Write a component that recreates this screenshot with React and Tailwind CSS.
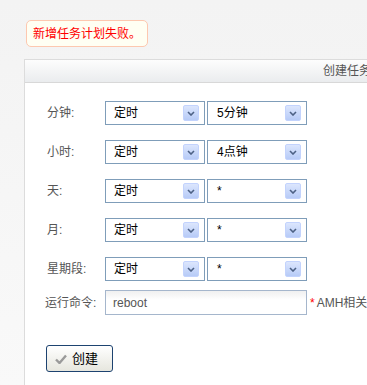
import React from 'react';

const FONT = { fontFamily: '"Liberation Sans", "Noto Sans CJK SC", sans-serif' };

const SelectBox = ({ value, pad = 'pl-[8px]' }) => (
  <div className={`relative flex items-center w-[100px] h-[24px] border border-[#7f9db9] bg-white text-[12px] text-black ${pad}`}>
    <span>{value}</span>
    <span className="absolute right-[5px] top-[3px] w-[16px] h-[16px] rounded-[2px] border border-[#c3d3fd] bg-gradient-to-b from-[#dce6fd] to-[#b7cbf7] flex items-center justify-center">
      <svg width="8" height="5" viewBox="0 0 8 5">
        <path d="M1 1 L4 4 L7 1" stroke="#4d6185" strokeWidth="1.6" fill="none" />
      </svg>
    </span>
  </div>
);

const rows = [
  { label: '分钟:', value: '5分钟' },
  { label: '小时:', value: '4点钟' },
  { label: '天:', value: '*' },
  { label: '月:', value: '*' },
  { label: '星期段:', value: '*' }
];

const App = () => {
  return (
    <div
      className="w-[367px] h-[385px] overflow-hidden bg-gradient-to-b from-[#f3f3f3] to-[#f9f9f9]"
      style={FONT}
    >
      <div className="pt-[20px] pl-[26px]">
        <div className="inline-flex items-center h-[27px] px-[6px] border border-[#fdc8b0] rounded-[5px] bg-[#fffff3] text-[12px] text-[#ff0000]">
          新增任务计划失败。
        </div>
      </div>
      <div className="mt-[12px] ml-[24px] w-[420px] border border-[#dcdcdc] bg-white">
        <div className="h-[23px] border-b border-[#d8d8d8] bg-gradient-to-b from-[#fdfdfd] to-[#eaecee] flex items-center pl-[298px] text-[12px] text-[#555]">
          创建任务计划
        </div>
        <div className="pl-[22px] pt-[18px] pb-[20px]">
          <div className="flex flex-col gap-[15px]">
            {rows.map(row => (
              <div key={row.label} className="flex items-center">
                <div className="w-[58px] text-[12px] text-[#555]">{row.label}</div>
                <SelectBox value="定时" />
                <div className="w-[2px]" />
                <SelectBox value={row.value} pad="pl-[9px]" />
              </div>
            ))}
          </div>
          <div className="flex items-center mt-[9px]">
            <div className="w-[58px] text-[12px] text-[#555] -ml-[2px] pr-[-2px]">运行命令:</div>
            <div className="ml-[2px] w-[202px] h-[25px] border border-[#a5b6cc] bg-gradient-to-b from-[#f0f0f0] to-white to-[40%] flex items-center pl-[7px] text-[12px] text-[#555]">
              reboot
            </div>
            <span className="ml-[3px] text-[12px] text-[#ff0000]">*</span>
            <span className="ml-[2px] text-[12px] text-[#555]">AMH相关</span>
          </div>
          <button className="mt-[30px] ml-[-1px] w-[67px] h-[27px] rounded-[3px] border border-[#1d4370] bg-gradient-to-b from-white to-[#e6e6de] flex items-center pl-[8px] gap-[5px] text-[13px] text-black">
            <svg width="12" height="10" viewBox="0 0 12 10">
              <path d="M1 5.5 L4.5 9 L11 1.5" stroke="#9a9a9a" strokeWidth="2.4" fill="none" />
            </svg>
            <span>创建</span>
          </button>
        </div>
      </div>
    </div>
  );
};

export default App;
